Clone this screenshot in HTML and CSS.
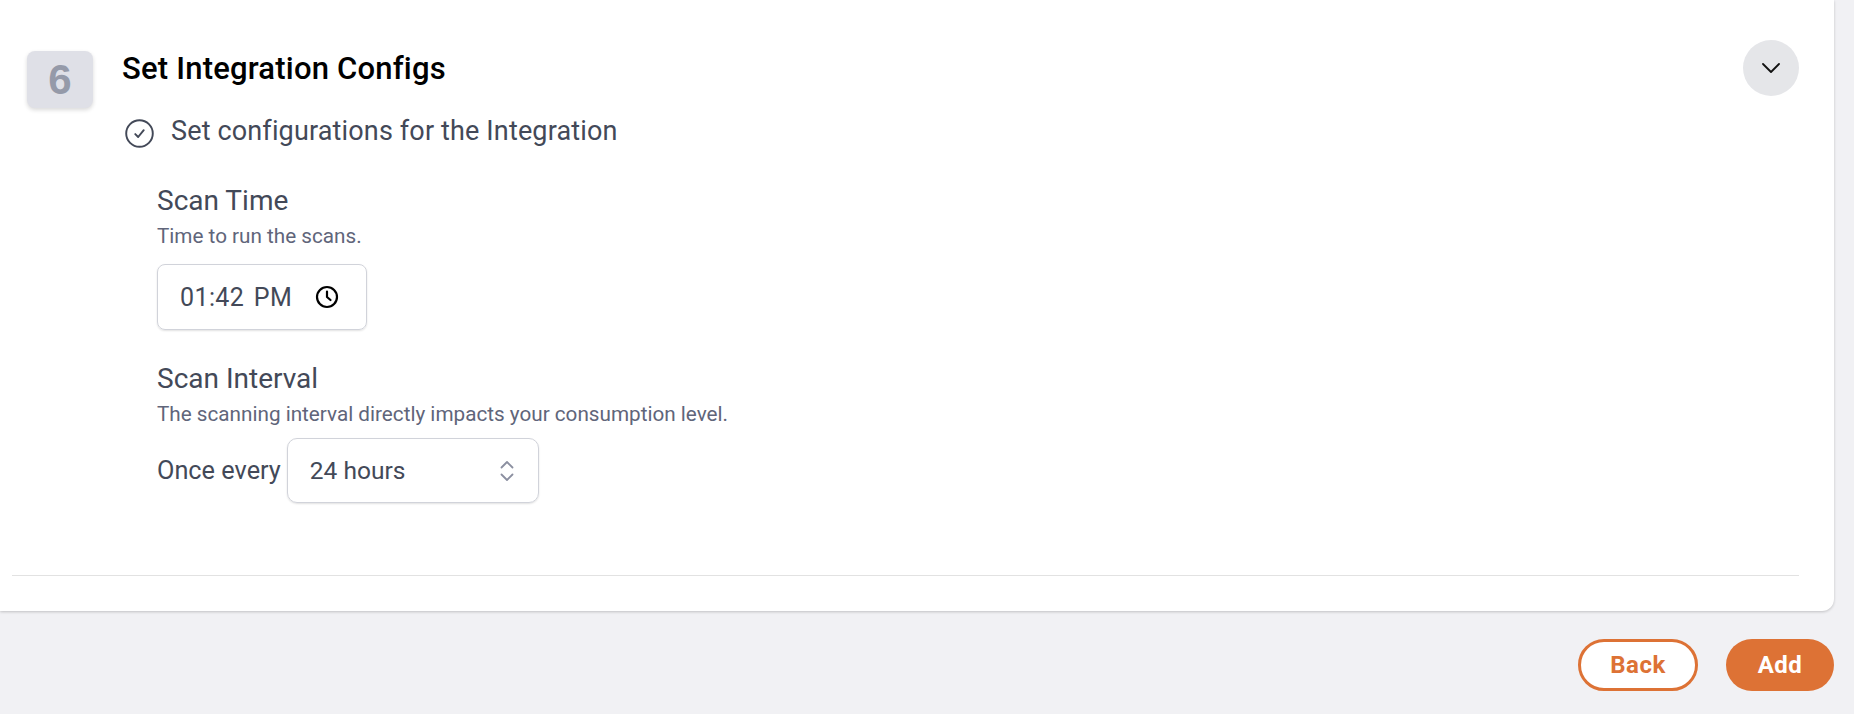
FILE: index.html
```html
<!DOCTYPE html>
<html lang="en">
<head>
  <meta charset="UTF-8" />
  <title>Set Integration Configs</title>
  <link rel="stylesheet" href="styles.css">
</head>
<body>
  <section class="card">
    <div class="step">
      <div class="step-badge">6</div>
      <div class="step-body">
        <h2 class="step-title">Set Integration Configs</h2>
        <div class="task">
          <svg class="task-icon" viewBox="0 0 24 24" fill="none" stroke="#434958" stroke-width="1.600" stroke-linecap="round" stroke-linejoin="round">
            <circle cx="12" cy="12" r="11"/>
            <path d="M8.500 12.500l2.400 2.400 4.600-5.600"/>
          </svg>
          <span>Set configurations for the Integration</span>
        </div>
        <div class="field">
          <div class="field-label">Scan Time</div>
          <div class="field-help">Time to run the scans.</div>
          <div class="time-input">
            <span class="time-value">01:42 PM</span>
            <svg class="clock" viewBox="0 0 24 24" fill="none" stroke="#000" stroke-width="2.200" stroke-linecap="round" stroke-linejoin="round">
              <circle cx="12" cy="12" r="10"/>
              <path d="M12 6.500V12l3.500 3"/>
            </svg>
          </div>
        </div>
        <div class="field">
          <div class="field-label">Scan Interval</div>
          <div class="field-help">The scanning interval directly impacts your consumption level.</div>
          <div class="interval-row">
            <span>Once every</span>
            <div class="select-box">
              <span>24 hours</span>
              <svg class="updown" viewBox="0 0 16 24" fill="none" stroke="#8b8fa0" stroke-width="1.800" stroke-linecap="round" stroke-linejoin="round">
                <path d="M2.500 8.500L8 3l5.500 5.500"/>
                <path d="M2.500 15.500L8 21l5.500-5.500"/>
              </svg>
            </div>
          </div>
        </div>
      </div>
      <button class="collapse-btn" aria-label="Collapse">
        <svg viewBox="0 0 20 12" fill="none" stroke="#111" stroke-width="1.800" stroke-linecap="round" stroke-linejoin="round">
          <path d="M2 2l8 8 8-8"/>
        </svg>
      </button>
    </div>
    <hr class="divider">
  </section>
  <div class="actions">
    <button class="btn btn-outline">Back</button>
    <button class="btn btn-solid">Add</button>
  </div>
</body>
</html>
```

FILE: styles.css
```css
body { margin: 0; height: 714px; overflow: hidden; background: #f1f1f4; font-family: Roboto, "Liberation Sans", sans-serif; color: #434958; }

.card { width: 1834px; height: 611px; box-sizing: border-box; background: #fff; border-radius: 0 0 12px 0; box-shadow: 0 1px 3px rgba(0,0,0,0.2); padding: 40px 35px 0 12px; }
.step { display: flex; height: 535px; }
.step-badge { width: 66px; height: 57px; margin: 11px 29px 0 15px; flex: none; background: #dfe0e7; border-radius: 8px; box-shadow: 0 2px 4px rgba(0,0,0,0.15); color: #959aa9; font-size: 42px; font-weight: 700; font-family: "Liberation Sans", sans-serif; display: flex; align-items: center; justify-content: center; }
.step-body { flex: 1; }
.step-title { margin: 10px 0 0; font-size: 31px; line-height: 38px; font-weight: 500; letter-spacing: 0.2px; color: #000; }

.task { display: flex; align-items: flex-start; gap: 17px; margin: 26px 0 0 3px; font-size: 27px; line-height: 34px; letter-spacing: 0.15px; }
.task-icon { width: 29px; height: 29px; margin-top: 5px; flex: none; }

.field { margin: 0 0 0 35px; }
.field-label { font-size: 28px; line-height: 34px; letter-spacing: 0; }
.field-help { font-size: 20.700px; line-height: 26px; margin-top: 5px; color: #60657a; }
.task + .field { margin-top: 36px; }
.field + .field { margin-top: 32px; }

.time-input { width: 210px; height: 66px; box-sizing: border-box; margin-top: 15px; padding: 0 22px; border: 1px solid #d1d3da; border-radius: 8px; box-shadow: 0 1px 2px rgba(0,0,0,0.12); display: flex; align-items: center; gap: 23px; font-size: 25px; }
.time-value { word-spacing: 3px; letter-spacing: 0.4px; white-space: nowrap; }
.clock { width: 24px; height: 24px; flex: none; }

.interval-row { display: flex; align-items: center; gap: 6px; margin-top: 11px; font-size: 25.300px; }
.select-box { width: 252px; height: 65px; box-sizing: border-box; padding: 0 22px; border: 1px solid #d1d3da; border-radius: 10px; box-shadow: 0 1px 2px rgba(0,0,0,0.12); display: flex; align-items: center; justify-content: space-between; font-size: 24.500px; }
.updown { width: 16px; height: 24px; margin-right: 1px; }

.collapse-btn { width: 56px; height: 56px; flex: none; padding: 0; border: 0; border-radius: 50%; background: #e5e6e9; display: flex; align-items: center; justify-content: center; }
.collapse-btn svg { width: 20px; height: 12px; }

.divider { margin: 0; border: 0; border-top: 1px solid #e2e2e2; width: 1787px; }

.actions { display: flex; justify-content: flex-end; gap: 28px; width: 1834px; margin-top: 28px; }
.btn { height: 52px; border-radius: 26px; box-sizing: border-box; font-family: Roboto, "Liberation Sans", sans-serif; font-size: 24px; font-weight: 700; letter-spacing: 0.5px; }
.btn-outline { width: 120px; background: #fff; border: 3px solid #dd7235; color: #dd7235; }
.btn-solid { width: 108px; background: #dd7235; border: 0; color: #fff; }
```
